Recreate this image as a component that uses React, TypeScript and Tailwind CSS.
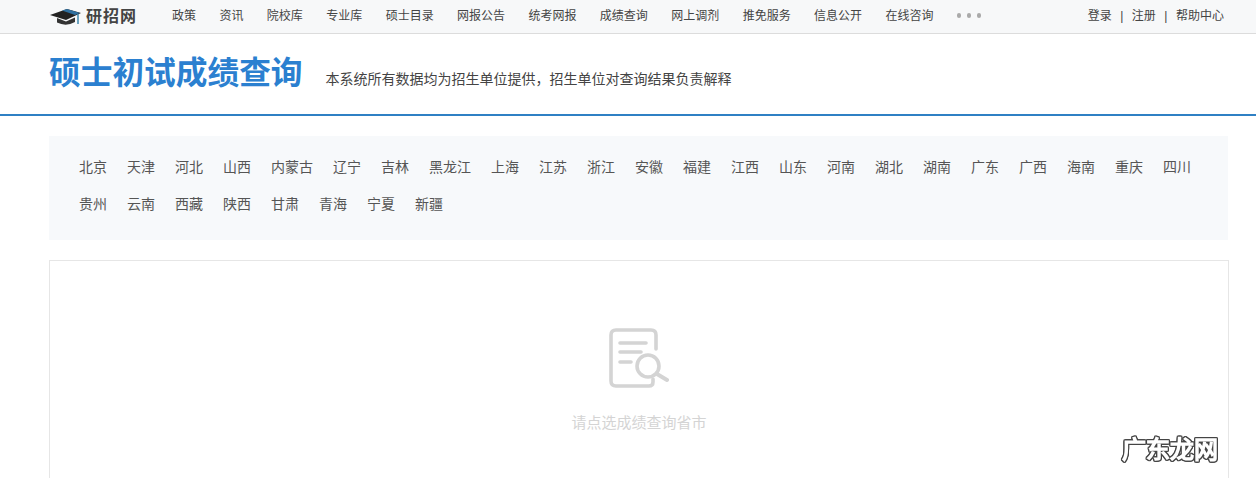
const navItems = ["政策", "资讯", "院校库", "专业库", "硕士目录", "网报公告", "统考网报", "成绩查询", "网上调剂", "推免服务", "信息公开", "在线咨询"];

const provinces = ["北京", "天津", "河北", "山西", "内蒙古", "辽宁", "吉林", "黑龙江", "上海", "江苏", "浙江", "安徽", "福建", "江西", "山东", "河南", "湖北", "湖南", "广东", "广西", "海南", "重庆", "四川", "贵州", "云南", "西藏", "陕西", "甘肃", "青海", "宁夏", "新疆"];

function CapLogo() {
  return (
    <svg width="32" height="20" viewBox="0 0 32 20" className="shrink-0">
      <path d="M0 8 L17 2 L31 6 L16 13 Z" fill="#222" />
      <path d="M7 11 L16 14.5 L25 10.5 L25 15 Q16 20 7 15.5 Z" fill="#333" />
      <path d="M12 3.5 L17 2 L30 6 L25 8 Z" fill="#2f6f9f" />
      <path d="M28 7 L28 17" stroke="#2f7fa8" strokeWidth="1.4" fill="none" />
    </svg>
  );
}

function EmptyIcon() {
  return (
    <svg width="60" height="60" viewBox="0 0 60 60" fill="none" stroke="#d4d4d4" strokeLinecap="round">
      <path d="M44 51 V54 Q44 58 40 58 H7 Q2 58 2 53 V7 Q2 2 7 2 H42 Q47 2 47 7 V21" strokeWidth="3.6" />
      <path d="M11 15 H37 M11 24 H32 M11 34 H22" strokeWidth="3.6" />
      <circle cx="39" cy="38" r="11" strokeWidth="3.6" />
      <path d="M48 46 L58 52" strokeWidth="4" />
    </svg>
  );
}

export default function App() {
  return (
    <div className="relative flex h-screen flex-col overflow-hidden bg-white font-['Liberation_Sans','Noto_Sans_CJK_SC',sans-serif]">
      <header className="flex h-[34px] shrink-0 items-center border-b border-[#dcdcdc] bg-[#f7f8f9] pr-[32px] pl-[50px]">
        <div className="flex w-[122px] items-center gap-[4px]">
          <CapLogo />
          <span className="text-[16px] font-bold tracking-[1px] text-[#444]">研招网</span>
        </div>
        <nav className="flex -translate-y-[1px] items-center gap-[23.4px] text-[12px] text-[#444]">
          {navItems.map((item) => (
            <a key={item}>{item}</a>
          ))}
          <div className="flex gap-[5.5px]">
            <span className="size-[4.5px] rounded-full bg-[#aaa]" />
            <span className="size-[4.5px] rounded-full bg-[#aaa]" />
            <span className="size-[4.5px] rounded-full bg-[#aaa]" />
          </div>
        </nav>
        <div className="ml-auto flex -translate-y-[1px] items-center gap-[8.5px] text-[12px] text-[#444]">
          <a>登录</a>
          <span>|</span>
          <a>注册</a>
          <span>|</span>
          <a>帮助中心</a>
        </div>
      </header>

      <div className="flex h-[82px] shrink-0 items-center gap-[23px] border-b-2 border-[#2f80c4] pl-[49px]">
        <h1 className="text-[31.7px] font-bold text-[#2b80d0]">硕士初试成绩查询</h1>
        <p className="mt-[10px] text-[14px] text-[#444]">本系统所有数据均为招生单位提供，招生单位对查询结果负责解释</p>
      </div>

      <div className="mx-[49px] mt-[20px] w-[1179px] shrink-0 bg-[#f7f9fb] pt-[13px] pb-[17px] pl-[30px]">
        <div className="flex flex-wrap gap-x-[20px] pr-[20px] text-[14px] text-[#555]">
          {provinces.map((p) => (
            <a key={p} className="h-[37px] leading-[37px]">{p}</a>
          ))}
        </div>
      </div>

      <div className="mx-[49px] mt-[20px] flex h-[300px] w-[1180px] shrink-0 flex-col items-center border border-[#e6e6e6] pt-[67px]">
        <EmptyIcon />
        <p className="mt-[24px] text-[15px] text-[#d4d4d4]">请点选成绩查询省市</p>
      </div>

      <span className="absolute top-[432px] left-[1122px] text-[24px] font-normal text-white [-webkit-text-stroke:1.5px_#fff] [filter:drop-shadow(1px_0_0_#444)_drop-shadow(-1px_0_0_#444)_drop-shadow(0_1px_0_#444)_drop-shadow(0_-1px_0_#444)]">
        广东龙网
      </span>
    </div>
  );
}
